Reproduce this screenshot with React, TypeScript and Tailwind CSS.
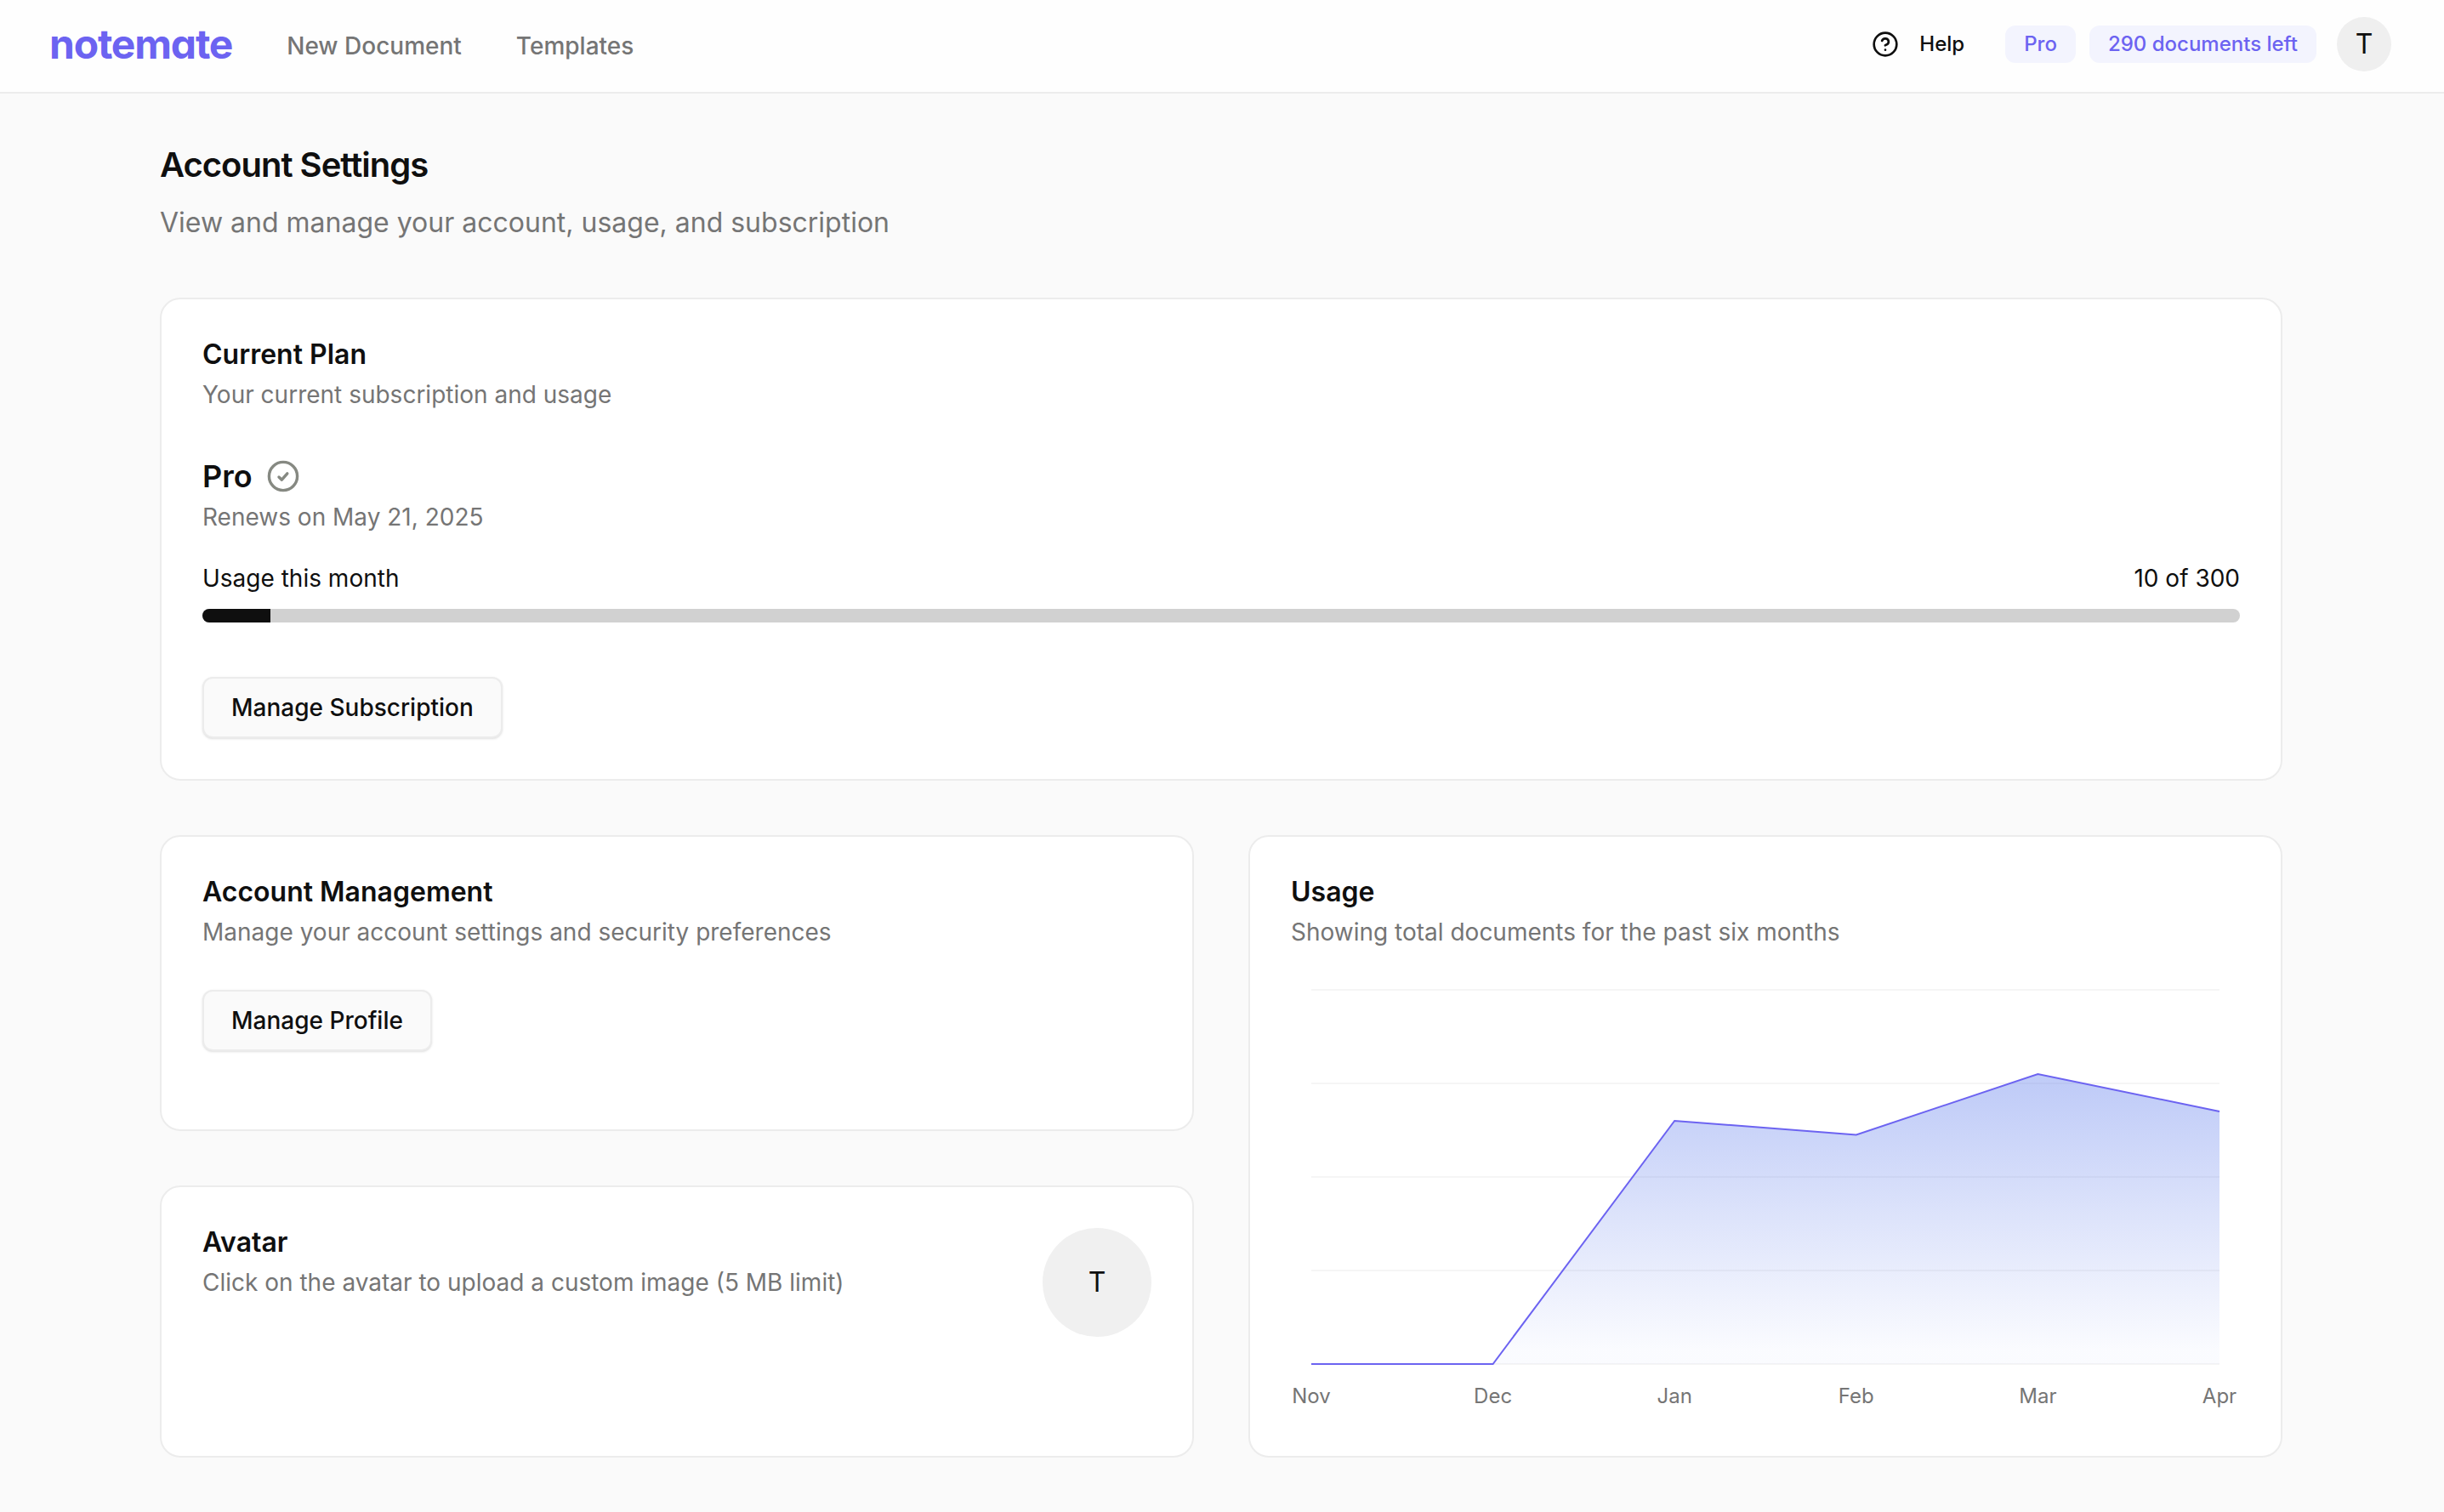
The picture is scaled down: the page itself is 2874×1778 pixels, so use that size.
import type { ReactNode } from 'react';
import { CircleHelp } from 'lucide-react';

const usage = [
  { month: 'Nov', documents: 0 },
  { month: 'Dec', documents: 0 },
  { month: 'Jan', documents: 52 },
  { month: 'Feb', documents: 49 },
  { month: 'Mar', documents: 62 },
  { month: 'Apr', documents: 54 },
];

const plan = { name: 'Pro', renews: 'May 21, 2025', used: 10, limit: 300 };

function Header() {
  return (
    <header className="flex h-[110px] items-center justify-between border-b-2 border-[#ececec] bg-[#fefefe] pr-[62px] pl-[58px]">
      <div className="flex items-center gap-16">
        <a href="#" className="pb-1 text-[48px] leading-[56px] font-bold tracking-tight text-[#6c63f1] [font-feature-settings:'cv11']">
          notemate
        </a>
        <nav className="flex gap-16 text-[28px] leading-10 font-medium text-[#757575]">
          <a href="#">New Document</a>
          <a href="#">Templates</a>
        </nav>
      </div>
      <div className="flex items-center gap-6 pb-1">
        <button className="mr-6 flex items-center gap-6 text-[24px] leading-8 font-medium">
          <CircleHelp size={32} strokeWidth={2} />
          Help
        </button>
        <div className="flex gap-4 text-[24px] leading-8 font-medium text-[#6c63f1]">
          <span className="rounded-xl bg-[#f3f4fe] px-[22px] py-[6px]">{plan.name}</span>
          <span className="rounded-xl bg-[#f3f4fe] px-[22px] py-[6px]">{plan.limit - plan.used} documents left</span>
        </div>
        <button aria-label="Account" className="grid size-16 place-items-center rounded-full bg-[#efefef] text-[32px] leading-10">
          T
        </button>
      </div>
    </header>
  );
}

function Card({ title, description, children, className = '' }: { title: string; description: string; children?: ReactNode; className?: string }) {
  return (
    <section className={`rounded-3xl border-2 border-[#ececec] bg-white p-12 ${className}`}>
      <div>
        <h2 className="text-[32px] leading-[34px] font-semibold">{title}</h2>
        <p className="mt-[10px] text-[28px] leading-10 text-[#757575]">{description}</p>
      </div>
      {children}
    </section>
  );
}

function OutlineButton({ children }: { children: ReactNode }) {
  return (
    <button className="h-[72px] rounded-xl border-2 border-[#ececec] bg-[#fafafa] px-8 text-[28px] leading-10 font-medium shadow-sm">
      {children}
    </button>
  );
}

function PlanCheck() {
  return (
    <svg viewBox="0 0 40 40" className="size-10" fill="none" stroke="#868982" strokeWidth="3.4" strokeLinecap="round" strokeLinejoin="round">
      <circle cx="20" cy="20" r="16.6" />
      <path d="M15 21l3.4 3.2 6.4-7.4" />
    </svg>
  );
}

// Area chart: 440 units of height for a 0–80 domain
const LEFT = 24;
const RIGHT = 1092;
const TOP = 8;
const BASE = 448;
const MAX = 80;

function UsageChart() {
  const points = usage.map((d, i) => ({
    ...d,
    x: LEFT + (i * (RIGHT - LEFT)) / (usage.length - 1),
    y: BASE - (d.documents / MAX) * (BASE - TOP),
  }));
  const line = points.map((p) => `${p.x},${p.y}`).join(' L');

  return (
    <svg viewBox="0 0 1116 508" className="w-full overflow-visible" role="img" aria-label="Documents per month">
      <defs>
        <linearGradient id="fill" x1="0" y1="0" x2="0" y2="1">
          <stop offset="0.05" stopColor="#5f7dec" stopOpacity="0.39" />
          <stop offset="0.95" stopColor="#5f7dec" stopOpacity="0.03" />
        </linearGradient>
      </defs>
      {[0, 20, 40, 60, 80].map((v) => {
        const y = BASE - (v / MAX) * (BASE - TOP);
        return <line key={v} x1={LEFT} x2={RIGHT} y1={y} y2={y} stroke="#f5f5f5" strokeWidth="2" />;
      })}
      <path d={`M${line} L${RIGHT},${BASE} L${LEFT},${BASE} Z`} fill="url(#fill)" />
      <path d={`M${line}`} fill="none" stroke="#6c63f1" strokeWidth="2" />
      {points.map((p) => (
        <text key={p.month} x={p.x} y={494} textAnchor="middle" className="fill-[#757575] text-[24px]">
          {p.month}
        </text>
      ))}
    </svg>
  );
}

export default function App() {
  return (
    <div className="min-h-screen bg-[#fafafa] font-['Inter',sans-serif] text-[#0f0f0f]">
      <Header />
      <main className="pt-16 pr-[190px] pb-16 pl-[188px]">
        <h1 className="text-[40px] leading-10 font-semibold tracking-tight">Account Settings</h1>
        <p className="mt-6 text-[32px] leading-12 text-[#757575]">View and manage your account, usage, and subscription</p>

        <Card title="Current Plan" description="Your current subscription and usage" className="mt-16">
          <div className="mt-13 flex items-center gap-4">
            <h3 className="text-[36px] leading-12 font-semibold">{plan.name}</h3>
            <PlanCheck />
          </div>
          <p className="mt-1 text-[28px] leading-10 text-[#757575]">Renews on {plan.renews}</p>
          <div className="mt-8 flex justify-between text-[28px] leading-10">
            <span>Usage this month</span>
            <span>
              {plan.used} of {plan.limit}
            </span>
          </div>
          <div className="mt-4 mb-16 h-4 overflow-hidden rounded-full bg-[#d1d1d1]">
            <div className="h-full bg-[#0f0f0f]" style={{ width: `${(plan.used / plan.limit) * 100}%` }} />
          </div>
          <OutlineButton>Manage Subscription</OutlineButton>
        </Card>

        <div className="mt-16 grid grid-cols-2 gap-16">
          <div className="flex flex-col gap-16">
            <Card title="Account Management" description="Manage your account settings and security preferences" className="h-[348px]">
              <div className="mt-12">
                <OutlineButton>Manage Profile</OutlineButton>
              </div>
            </Card>
            <Card title="Avatar" description="Click on the avatar to upload a custom image (5 MB limit)" className="flex flex-1 justify-between">
              <button aria-label="Upload avatar" className="grid size-32 place-items-center rounded-full bg-[#f0f0f0] text-[32px] leading-10">
                T
              </button>
            </Card>
          </div>
          <Card title="Usage" description="Showing total documents for the past six months">
            <div className="mt-10">
              <UsageChart />
            </div>
          </Card>
        </div>
      </main>
    </div>
  );
}
